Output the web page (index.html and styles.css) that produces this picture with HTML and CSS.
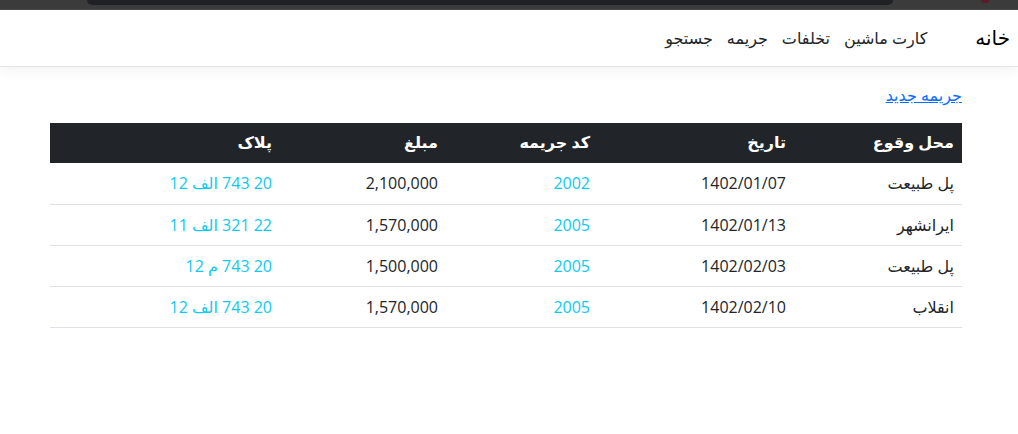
FILE: index.html
```html
<!DOCTYPE html>
<html lang="fa" dir="rtl">
<head>
<meta charset="utf-8">
<title>جریمه</title>
<link rel="stylesheet" href="styles.css">
</head>
<body>
<div class="chrome">
  <div class="chrome-tab"></div>
  <div class="chrome-dot"></div>
</div>
<header class="navbar">
  <a class="brand" href="#">خانه</a>
  <ul class="nav">
    <li><a class="nav-link" href="#">کارت ماشین</a></li>
    <li><a class="nav-link" href="#">تخلفات</a></li>
    <li><a class="nav-link" href="#">جریمه</a></li>
    <li><a class="nav-link" href="#">جستجو</a></li>
  </ul>
</header>
<main class="container">
  <p class="actions"><a class="new-link" href="#">جریمه جدید</a></p>
  <table class="fines">
    <thead>
      <tr>
        <th class="c-place">محل وقوع</th>
        <th class="c-date">تاریخ</th>
        <th class="c-code">کد جریمه</th>
        <th class="c-amount">مبلغ</th>
        <th class="c-plate">پلاک</th>
      </tr>
    </thead>
    <tbody>
      <tr>
        <td>پل طبیعت</td>
        <td>1402/01/07</td>
        <td class="info">2002</td>
        <td>2,100,000</td>
        <td class="info">20 743 الف 12</td>
      </tr>
      <tr>
        <td>ایرانشهر</td>
        <td>1402/01/13</td>
        <td class="info">2005</td>
        <td>1,570,000</td>
        <td class="info">22 321 الف 11</td>
      </tr>
      <tr>
        <td>پل طبیعت</td>
        <td>1402/02/03</td>
        <td class="info">2005</td>
        <td>1,500,000</td>
        <td class="info">20 743 م 12</td>
      </tr>
      <tr>
        <td>انقلاب</td>
        <td>1402/02/10</td>
        <td class="info">2005</td>
        <td>1,570,000</td>
        <td class="info">20 743 الف 12</td>
      </tr>
    </tbody>
  </table>
</main>
</body>
</html>
```

FILE: styles.css
```css
* { box-sizing: border-box; }

html, body {
  margin: 0;
  padding: 0;
  background: #fff;
}

body {
  font-family: "Open Sans", "DejaVu Sans", sans-serif;
  font-size: 16px;
  line-height: 1.5;
  color: #212529;
}

.chrome {
  position: relative;
  height: 10px;
  background: #3b3b3b;
  border-bottom: 1px solid #4a4a4a;
}

.chrome-tab {
  position: absolute;
  left: 87px;
  width: 806px;
  top: 0;
  height: 5px;
  background: #202124;
  border-radius: 0 0 6px 6px;
}

.chrome-dot {
  position: absolute;
  left: 981px;
  top: 0;
  width: 8px;
  height: 3px;
  background: #5a1a2a;
  border-radius: 0 0 4px 4px;
}

.navbar {
  display: flex;
  align-items: center;
  height: 57px;
  padding: 0 8px;
  border-bottom: 1px solid #e5e5e5;
  box-shadow: 0 .25rem .75rem rgba(0, 0, 0, .05);
  margin-bottom: 16px;
}

.brand {
  font-size: 20px;
  line-height: 30px;
  color: #000;
  text-decoration: none;
}

.nav {
  display: flex;
  list-style: none;
  margin: 0 41px 0 0;
  padding: 0;
}

.nav-link {
  display: block;
  padding: 8px 7px;
  color: #212529;
  text-decoration: none;
  font-size: 16px;
}

.container {
  padding: 0 56px 0 50px;
}

.actions {
  margin: 0 0 16px;
  line-height: 24px;
}

.new-link {
  color: #0d6efd;
  text-decoration: underline;
}

.fines {
  width: 100%;
  border-collapse: collapse;
  table-layout: fixed;
}

.fines th,
.fines td {
  padding: 8px;
  text-align: right;
  border-bottom: 1px solid #dee2e6;
  line-height: 24px;
  white-space: nowrap;
}

.fines thead th {
  background: #212529;
  color: #fff;
  font-weight: bold;
  border-bottom: 0;
  height: 40px;
  padding-top: 7px;
  padding-bottom: 9px;
}

.fines td {
  height: 41px;
}

.c-place { width: 168px; }
.c-date { width: 196px; }
.c-code { width: 152px; }
.c-amount { width: 166px; }
.c-plate { width: auto; }

.info { color: #0dcaf0; }
```
